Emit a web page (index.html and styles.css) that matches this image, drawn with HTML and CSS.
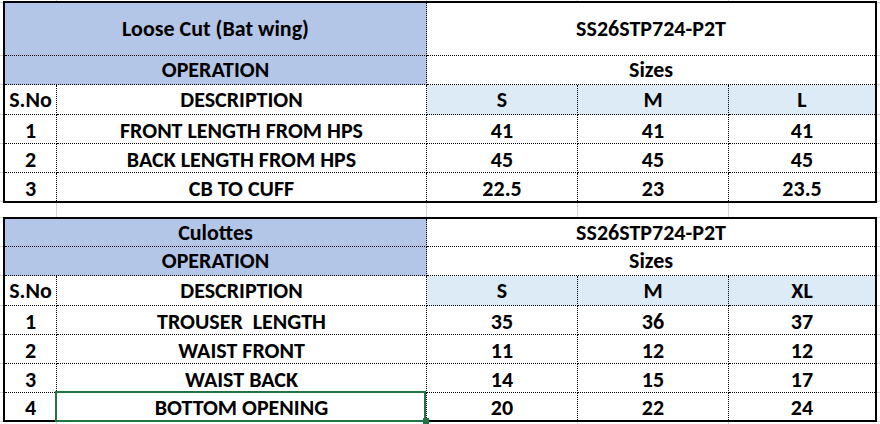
FILE: index.html
```html
<!DOCTYPE html>
<html>
<head>
<meta charset="utf-8">
<link rel="stylesheet" href="styles.css">
</head>
<body>
<div class="sheet">
  <table class="spec">
    <colgroup><col class="c-no"><col class="c-desc"><col class="c-size"><col class="c-size"><col class="c-last"></colgroup>
    <tr class="h53"><td colspan="2" class="blue">Loose Cut (Bat wing)</td><td colspan="3" class="last">SS26STP724-P2T</td></tr>
    <tr class="h29"><td colspan="2" class="blue">OPERATION</td><td colspan="3" class="last">Sizes</td></tr>
    <tr class="h30"><td>S.No</td><td>DESCRIPTION</td><td class="lb">S</td><td class="lb">M</td><td class="lb last">L</td></tr>
    <tr class="h29 data"><td>1</td><td>FRONT LENGTH FROM HPS</td><td>41</td><td>41</td><td class="last">41</td></tr>
    <tr class="h29 data"><td>2</td><td>BACK LENGTH FROM HPS</td><td>45</td><td>45</td><td class="last">45</td></tr>
    <tr class="h28 data end"><td>3</td><td>CB TO CUFF</td><td>22.5</td><td>23</td><td class="last">23.5</td></tr>
  </table>

  <table class="spec second">
    <colgroup><col class="c-no"><col class="c-desc"><col class="c-size"><col class="c-size"><col class="c-last"></colgroup>
    <tr class="h28"><td colspan="2" class="blue">Culottes</td><td colspan="3" class="last">SS26STP724-P2T</td></tr>
    <tr class="h29"><td colspan="2" class="blue">OPERATION</td><td colspan="3" class="last">Sizes</td></tr>
    <tr class="h30"><td>S.No</td><td>DESCRIPTION</td><td class="lb">S</td><td class="lb">M</td><td class="lb last">XL</td></tr>
    <tr class="h29 data"><td>1</td><td>TROUSER&nbsp; LENGTH</td><td>35</td><td>36</td><td class="last">37</td></tr>
    <tr class="h29 data"><td>2</td><td>WAIST FRONT</td><td>11</td><td>12</td><td class="last">12</td></tr>
    <tr class="h29 data"><td>3</td><td>WAIST BACK</td><td>14</td><td>15</td><td class="last">17</td></tr>
    <tr class="h27 data end"><td>4</td><td class="selected">BOTTOM OPENING</td><td>20</td><td>22</td><td class="last">24</td></tr>
  </table>
</div>
</body>
</html>
```

FILE: styles.css
```css
html, body {
  margin: 0;
  padding: 0;
}

body {
  width: 880px;
  height: 424px;
  overflow: hidden;
  background-color: #ffffff;
  background-image:
    linear-gradient(#d4d4d4, #d4d4d4),
    linear-gradient(#d4d4d4, #d4d4d4),
    linear-gradient(#d4d4d4, #d4d4d4),
    linear-gradient(#d4d4d4, #d4d4d4),
    linear-gradient(#d4d4d4, #d4d4d4),
    linear-gradient(#d4d4d4, #d4d4d4),
    linear-gradient(#d4d4d4, #d4d4d4),
    linear-gradient(#d4d4d4, #d4d4d4),
    linear-gradient(#d4d4d4, #d4d4d4),
    linear-gradient(#d4d4d4, #d4d4d4),
    linear-gradient(#d4d4d4, #d4d4d4),
    linear-gradient(#d4d4d4, #d4d4d4),
    linear-gradient(#d4d4d4, #d4d4d4),
    linear-gradient(#d4d4d4, #d4d4d4),
    linear-gradient(#d4d4d4, #d4d4d4),
    linear-gradient(#d4d4d4, #d4d4d4),
    linear-gradient(#d4d4d4, #d4d4d4),
    linear-gradient(#d4d4d4, #d4d4d4),
    linear-gradient(#d4d4d4, #d4d4d4);
  background-repeat: no-repeat;
  background-size:
    1px 100%, 1px 100%, 1px 100%, 1px 100%,
    100% 1px, 100% 1px, 100% 1px, 100% 1px, 100% 1px,
    100% 1px, 100% 1px, 100% 1px, 100% 1px, 100% 1px,
    100% 1px, 100% 1px, 100% 1px, 100% 1px, 100% 1px;
  background-position:
    56px 0, 426px 0, 577px 0, 728px 0,
    0 2px, 0 55px, 0 84px, 0 114px, 0 143px,
    0 172px, 0 201px, 0 217px, 0 246px, 0 275px,
    0 305px, 0 334px, 0 363px, 0 392px, 0 421px;
}

.sheet {
  padding: 1px 0 0 3px;
}

.spec {
  border-collapse: separate;
  border-spacing: 0;
  border: 2px solid #000;
  table-layout: fixed;
  width: 874px;
  background: #ffffff;
  font-family: Carlito, Calibri, Lato, "Liberation Sans", sans-serif;
  font-weight: bold;
  font-size: 22px;
  color: #000;
}

.second {
  margin-top: 14px;
}

.c-no { width: 52px; }
.c-desc { width: 370px; }
.c-size { width: 151px; }
.c-last { width: 146px; }

.spec td {
  padding: 0;
  border-right: 1px dotted #000;
  border-bottom: 1px dotted #000;
  text-align: center;
  vertical-align: middle;
  white-space: nowrap;
  line-height: 1;
}

.spec td.last {
  border-right: none;
}

.spec tr.end td {
  border-bottom: none;
}

.h53 { height: 53px; }
.h30 { height: 30px; }
.h29 { height: 29px; }
.h28 { height: 28px; }
.h27 { height: 27px; }

.data td {
  padding-top: 3px;
}

.blue {
  background: #b4c6e7;
}

.lb {
  background: #ddebf7;
}

.selected {
  position: relative;
}

.selected::after {
  content: "";
  position: absolute;
  top: -2px;
  left: -2px;
  right: 0;
  bottom: -2px;
  border: 2px solid #217346;
}

.selected::before {
  content: "";
  position: absolute;
  right: -3px;
  bottom: -4px;
  width: 6px;
  height: 6px;
  background: #217346;
  z-index: 1;
}
```
